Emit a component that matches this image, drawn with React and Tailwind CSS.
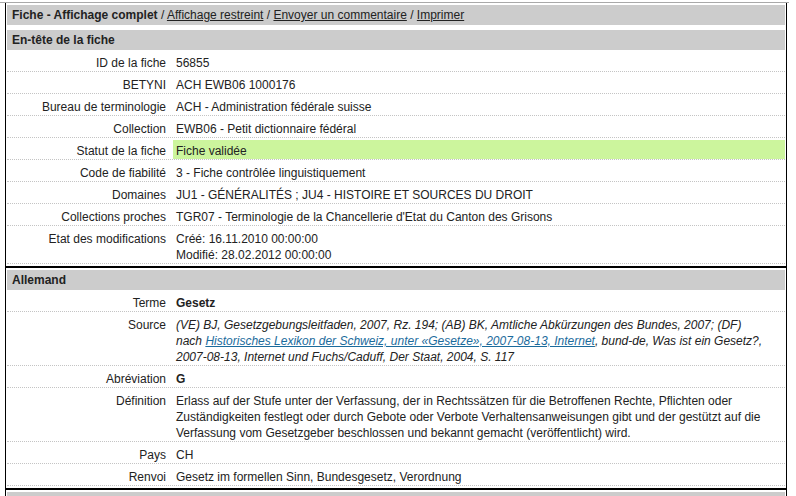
import React from "react";

const enTete = [
  { label: "ID de la fiche", value: "56855" },
  { label: "BETYNI", value: "ACH EWB06 1000176" },
  { label: "Bureau de terminologie", value: "ACH - Administration fédérale suisse" },
  { label: "Collection", value: "EWB06 - Petit dictionnaire fédéral" },
  { label: "Statut de la fiche", value: "Fiche validée", green: true },
  { label: "Code de fiabilité", value: "3 - Fiche contrôlée linguistiquement" },
  { label: "Domaines", value: "JU1 - GÉNÉRALITÉS ; JU4 - HISTOIRE ET SOURCES DU DROIT" },
  { label: "Collections proches", value: "TGR07 - Terminologie de la Chancellerie d'Etat du Canton des Grisons" },
  {
    label: "Etat des modifications",
    value: (
      <>
        Créé: 16.11.2010 00:00:00
        <br />
        Modifié: 28.02.2012 00:00:00
      </>
    ),
  },
];

const allemand = [
  { label: "Terme", value: <span className="font-bold">Gesetz</span> },
  {
    label: "Source",
    value: (
      <span className="italic">
        (VE) BJ, Gesetzgebungsleitfaden, 2007, Rz. 194; (AB) BK, Amtliche Abkürzungen des Bundes, 2007; (DF)
        <br />
        nach{" "}
        <a href="#" className="text-[#1b6b9c] underline">
          Historisches Lexikon der Schweiz, unter «Gesetze», 2007-08-13, Internet
        </a>
        , bund-de, Was ist ein Gesetz?,
        <br />
        2007-08-13, Internet und Fuchs/Caduff, Der Staat, 2004, S. 117
      </span>
    ),
  },
  { label: "Abréviation", value: <span className="font-bold">G</span> },
  {
    label: "Définition",
    value: (
      <>
        Erlass auf der Stufe unter der Verfassung, der in Rechtssätzen für die Betroffenen Rechte, Pflichten oder
        <br />
        Zuständigkeiten festlegt oder durch Gebote oder Verbote Verhaltensanweisungen gibt und der gestützt auf die
        <br />
        Verfassung vom Gesetzgeber beschlossen und bekannt gemacht (veröffentlicht) wird.
      </>
    ),
  },
  { label: "Pays", value: "CH" },
  { label: "Renvoi", value: "Gesetz im formellen Sinn, Bundesgesetz, Verordnung" },
];

const Bar = ({ children, className = "" }) => (
  <div className={`h-[20px] bg-[#cccccc] px-[5px] leading-[20px] ${className}`}>{children}</div>
);

const Row = ({ label, value, green }) => (
  <div className="flex pt-[2px] border-b border-dotted border-[#c4c4c4]">
    <div className="w-[166px] shrink-0 pr-[7px] pt-[3px] text-right leading-[16px]">
      {label}
    </div>
    <div
      className={`flex-1 pl-[3px] pt-[3px] leading-[16px] ${green ? "bg-[#ccf59d]" : ""}`}
    >
      {value}
    </div>
  </div>
);

const Box = ({ children, className = "" }) => (
  <div className={`border-x border-b-2 border-black px-px pt-[2px] pb-[2px] ${className}`}>
    {children}
  </div>
);

export default function App() {
  return (
    <div
      className="w-[796px] h-[496px] overflow-hidden bg-white text-[12px] text-[#222]"
      style={{ fontFamily: '"Liberation Sans", Arial, sans-serif' }}
    >
      <div className="mt-[2px] w-[789px] border-t border-[#a9a9a9]">
        <div className="ml-[5px] w-[782px]">
          <Box>
            <Bar className="mb-[5px]">
              <span className="font-bold">Fiche - Affichage complet</span>
              {" / "}
              <a href="#" className="underline">Affichage restreint</a>
              {" / "}
              <a href="#" className="underline">Envoyer un commentaire</a>
              {" / "}
              <a href="#" className="underline">Imprimer</a>
            </Bar>
            <Bar className="font-bold">En-tête de la fiche</Bar>
            {enTete.map((r) => (
              <Row key={r.label} {...r} />
            ))}
          </Box>
          <Box>
            <Bar className="font-bold">Allemand</Bar>
            {allemand.map((r) => (
              <Row key={r.label} {...r} />
            ))}
          </Box>
          <Box>
            <Bar />
          </Box>
        </div>
      </div>
    </div>
  );
}
